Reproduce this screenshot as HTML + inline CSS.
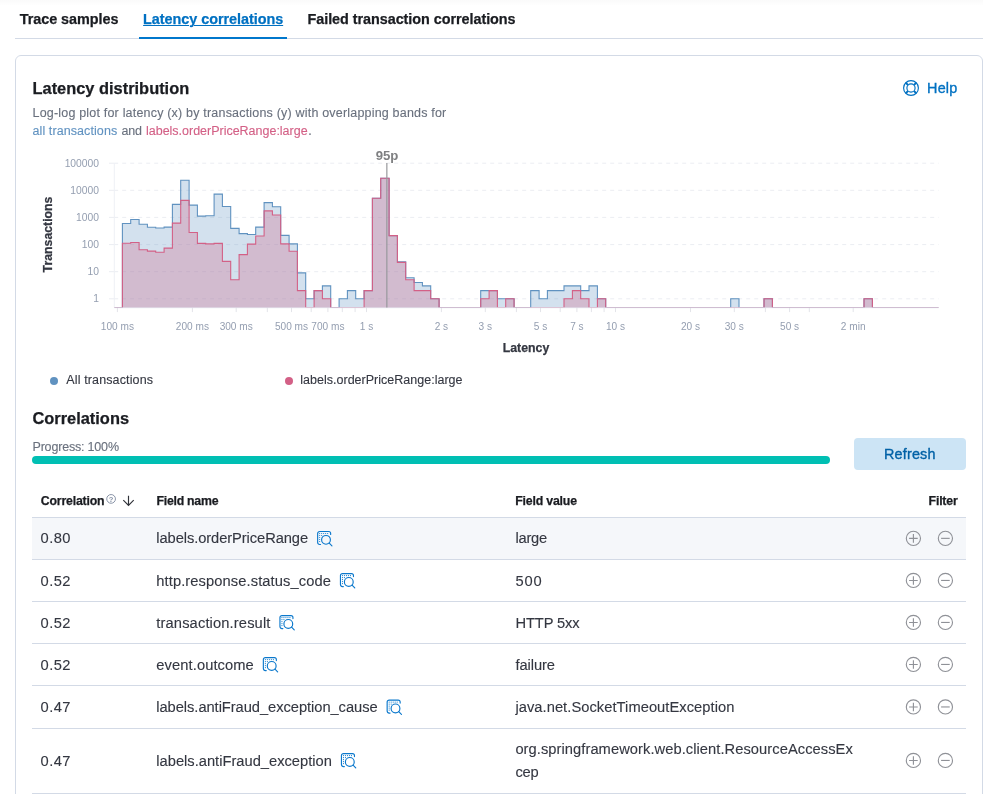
<!DOCTYPE html>
<html lang="en"><head><meta charset="utf-8"><title>Latency correlations</title>
<style>
html,body{margin:0;padding:0;background:#fff}
body{width:983px;height:794px;position:relative;overflow:hidden;font-family:"Liberation Sans",sans-serif;color:#343741}
.t{position:absolute;white-space:nowrap}
.ic{position:absolute}
.abs{position:absolute}
svg text{font-family:"Liberation Sans",sans-serif}
.chart{position:absolute;left:0;top:0}
#wrap{position:absolute;left:0;top:0;width:983px;height:794px;overflow:hidden;will-change:transform}
</style></head><body><div id="wrap">
<div class="abs" style="left:0;top:0;width:983px;height:5px;background:linear-gradient(#fafafa,#fefefe)"></div>
<div class="abs" style="left:15px;top:38px;width:968px;height:1px;background:#d3dae6"></div>
<div class="abs" style="left:139px;top:37px;width:148px;height:2px;background:#0077cc"></div>
<span class="t" id="tab1" style="left:19.8px;top:8.4px;font-size:14.4px;line-height:22px;font-weight:700;color:#1a1c21;letter-spacing:-0.051px;-webkit-text-stroke:0.25px #1a1c21;">Trace samples</span>
<span class="t" id="tab2" style="left:143.1px;top:8.4px;font-size:14.4px;line-height:22px;font-weight:700;color:#0071c2;letter-spacing:-0.035px;text-decoration:underline;text-underline-offset:1px;text-decoration-thickness:1.3px;-webkit-text-stroke:0.25px #0071c2;">Latency correlations</span>
<span class="t" id="tab3" style="left:307.5px;top:8.4px;font-size:14.4px;line-height:22px;font-weight:700;color:#1a1c21;letter-spacing:-0.048px;-webkit-text-stroke:0.25px #1a1c21;">Failed transaction correlations</span>
<div class="abs" style="left:15px;top:55px;width:966px;height:760px;border:1px solid #d3dae6;border-radius:6px;box-sizing:content-box"></div>
<span class="t" id="title" style="left:32.5px;top:76.2px;font-size:16.4px;line-height:24px;font-weight:700;color:#1a1c21;letter-spacing:0.003px;-webkit-text-stroke:0.25px #1a1c21;">Latency distribution</span>
<span class="t" id="d1" style="left:32.5px;top:103.6px;font-size:12.5px;line-height:18px;font-weight:400;color:#69707d;letter-spacing:0.193px;-webkit-text-stroke:0.12px #69707d;">Log-log plot for latency (x) by transactions (y) with overlapping bands for</span>
<span class="t" id="d2a" style="left:32.5px;top:121.8px;font-size:12.5px;line-height:18px;font-weight:400;color:#6092c0;letter-spacing:0.087px;-webkit-text-stroke:0.12px #6092c0;">all transactions</span>
<span class="t" id="d2b" style="left:121.6px;top:121.8px;font-size:12.5px;line-height:18px;font-weight:400;color:#69707d;letter-spacing:-0.229px;-webkit-text-stroke:0.12px #69707d;">and</span>
<span class="t" id="d2c" style="left:146.0px;top:121.8px;font-size:12.5px;line-height:18px;font-weight:400;color:#d36086;letter-spacing:-0.011px;-webkit-text-stroke:0.12px #d36086;">labels.orderPriceRange:large</span>
<span class="t" id="d2d" style="left:308.2px;top:121.8px;font-size:12.5px;line-height:18px;font-weight:400;color:#69707d;letter-spacing:0.000px;-webkit-text-stroke:0.12px #69707d;">.</span>
<span class="t" id="help" style="left:927.1px;top:76.6px;font-size:14.4px;line-height:22px;font-weight:500;color:#0071c2;letter-spacing:0.166px;-webkit-text-stroke:0.35px #0071c2;">Help</span>
<svg class="chart" width="983" height="400" viewBox="0 0 983 400">
<line x1="114.2" x2="938.7" y1="298.8" y2="298.8" stroke="#ebedf2" stroke-width="1" stroke-dasharray="4 4"/>
<line x1="109" x2="114.2" y1="298.8" y2="298.8" stroke="#ebedf2" stroke-width="1"/>
<line x1="114.2" x2="938.7" y1="271.7" y2="271.7" stroke="#ebedf2" stroke-width="1" stroke-dasharray="4 4"/>
<line x1="109" x2="114.2" y1="271.7" y2="271.7" stroke="#ebedf2" stroke-width="1"/>
<line x1="114.2" x2="938.7" y1="244.6" y2="244.6" stroke="#ebedf2" stroke-width="1" stroke-dasharray="4 4"/>
<line x1="109" x2="114.2" y1="244.6" y2="244.6" stroke="#ebedf2" stroke-width="1"/>
<line x1="114.2" x2="938.7" y1="217.4" y2="217.4" stroke="#ebedf2" stroke-width="1" stroke-dasharray="4 4"/>
<line x1="109" x2="114.2" y1="217.4" y2="217.4" stroke="#ebedf2" stroke-width="1"/>
<line x1="114.2" x2="938.7" y1="190.3" y2="190.3" stroke="#ebedf2" stroke-width="1" stroke-dasharray="4 4"/>
<line x1="109" x2="114.2" y1="190.3" y2="190.3" stroke="#ebedf2" stroke-width="1"/>
<line x1="114.2" x2="938.7" y1="163.2" y2="163.2" stroke="#ebedf2" stroke-width="1" stroke-dasharray="4 4"/>
<line x1="109" x2="114.2" y1="163.2" y2="163.2" stroke="#ebedf2" stroke-width="1"/>
<line x1="114.3" x2="114.3" y1="163" y2="307.5" stroke="#eef0f5" stroke-width="1"/>
<line x1="114.3" x2="938.7" y1="307.8" y2="307.8" stroke="#eef0f5" stroke-width="1"/>
<line x1="117.4" x2="117.4" y1="307.8" y2="312.1" stroke="#e3e4e9" stroke-width="1"/>
<line x1="192.4" x2="192.4" y1="307.8" y2="312.1" stroke="#e3e4e9" stroke-width="1"/>
<line x1="236.2" x2="236.2" y1="307.8" y2="312.1" stroke="#e3e4e9" stroke-width="1"/>
<line x1="267.3" x2="267.3" y1="307.8" y2="312.1" stroke="#e3e4e9" stroke-width="1"/>
<line x1="291.5" x2="291.5" y1="307.8" y2="312.1" stroke="#e3e4e9" stroke-width="1"/>
<line x1="311.2" x2="311.2" y1="307.8" y2="312.1" stroke="#e3e4e9" stroke-width="1"/>
<line x1="327.9" x2="327.9" y1="307.8" y2="312.1" stroke="#e3e4e9" stroke-width="1"/>
<line x1="342.3" x2="342.3" y1="307.8" y2="312.1" stroke="#e3e4e9" stroke-width="1"/>
<line x1="355.1" x2="355.1" y1="307.8" y2="312.1" stroke="#e3e4e9" stroke-width="1"/>
<line x1="366.5" x2="366.5" y1="307.8" y2="312.1" stroke="#e3e4e9" stroke-width="1"/>
<line x1="441.4" x2="441.4" y1="307.8" y2="312.1" stroke="#e3e4e9" stroke-width="1"/>
<line x1="485.3" x2="485.3" y1="307.8" y2="312.1" stroke="#e3e4e9" stroke-width="1"/>
<line x1="516.4" x2="516.4" y1="307.8" y2="312.1" stroke="#e3e4e9" stroke-width="1"/>
<line x1="540.5" x2="540.5" y1="307.8" y2="312.1" stroke="#e3e4e9" stroke-width="1"/>
<line x1="560.2" x2="560.2" y1="307.8" y2="312.1" stroke="#e3e4e9" stroke-width="1"/>
<line x1="576.9" x2="576.9" y1="307.8" y2="312.1" stroke="#e3e4e9" stroke-width="1"/>
<line x1="591.4" x2="591.4" y1="307.8" y2="312.1" stroke="#e3e4e9" stroke-width="1"/>
<line x1="604.1" x2="604.1" y1="307.8" y2="312.1" stroke="#e3e4e9" stroke-width="1"/>
<line x1="615.5" x2="615.5" y1="307.8" y2="312.1" stroke="#e3e4e9" stroke-width="1"/>
<line x1="690.5" x2="690.5" y1="307.8" y2="312.1" stroke="#e3e4e9" stroke-width="1"/>
<line x1="734.3" x2="734.3" y1="307.8" y2="312.1" stroke="#e3e4e9" stroke-width="1"/>
<line x1="765.4" x2="765.4" y1="307.8" y2="312.1" stroke="#e3e4e9" stroke-width="1"/>
<line x1="789.6" x2="789.6" y1="307.8" y2="312.1" stroke="#e3e4e9" stroke-width="1"/>
<line x1="809.3" x2="809.3" y1="307.8" y2="312.1" stroke="#e3e4e9" stroke-width="1"/>
<line x1="853.2" x2="853.2" y1="307.8" y2="312.1" stroke="#e3e4e9" stroke-width="1"/>
<defs><clipPath id="cp"><rect x="100" y="150" width="850" height="157.25"/></clipPath></defs>
<path d="M114.3 307.5H122.4 V223.5H130.7 V219.5H139.1 V224.2H147.4 V227.3H155.7 V228.0H164.1 V227.1H172.4 V204.4H180.7 V180.2H189.1 V205.1H197.4 V216.1H205.7 V215.7H214.1 V194.1H222.4 V206.5H230.7 V228.4H239.1 V233.6H247.4 V234.5H255.7 V227.1H264.1 V202.6H272.4 V206.7H280.7 V235.4H289.1 V243.9H297.4 V272.9H305.7 V298.8H314.1 V290.6H322.4 V285.9H330.7 V307.5H339.1 V298.8H347.4 V290.6H355.7 V298.8H364.1 V290.6H372.4 V198.2H380.7 V178.2H389.1 V235.6H397.4 V261.9H405.7 V277.7H414.1 V282.5H422.4 V285.9H430.7 V298.8H439.1 V307.5H480.7 V290.6H497.4 V298.8H514.1 V307.5H530.7 V290.6H539.1 V298.8H547.4 V290.6H564.0 V285.9H580.7 V290.6H589.0 V285.9H597.4 V298.8H605.7 V307.5H730.7 V298.8H739.0 V307.5H764.0 V298.8H772.4 V307.5H864.0 V298.8H872.4 V307.5H938.7Z" fill="#6092C0" fill-opacity="0.275"/>
<path d="M114.3 307.5H122.4 V223.5H130.7 V219.5H139.1 V224.2H147.4 V227.3H155.7 V228.0H164.1 V227.1H172.4 V204.4H180.7 V180.2H189.1 V205.1H197.4 V216.1H205.7 V215.7H214.1 V194.1H222.4 V206.5H230.7 V228.4H239.1 V233.6H247.4 V234.5H255.7 V227.1H264.1 V202.6H272.4 V206.7H280.7 V235.4H289.1 V243.9H297.4 V272.9H305.7 V298.8H314.1 V290.6H322.4 V285.9H330.7 V307.5H339.1 V298.8H347.4 V290.6H355.7 V298.8H364.1 V290.6H372.4 V198.2H380.7 V178.2H389.1 V235.6H397.4 V261.9H405.7 V277.7H414.1 V282.5H422.4 V285.9H430.7 V298.8H439.1 V307.5H480.7 V290.6H497.4 V298.8H514.1 V307.5H530.7 V290.6H539.1 V298.8H547.4 V290.6H564.0 V285.9H580.7 V290.6H589.0 V285.9H597.4 V298.8H605.7 V307.5H730.7 V298.8H739.0 V307.5H764.0 V298.8H772.4 V307.5H864.0 V298.8H872.4 V307.5H938.7" fill="none" stroke="#6092C0" stroke-width="1.1" clip-path="url(#cp)"/>
<path d="M114.3 307.5H122.4 V243.2H130.7 V242.5H139.1 V249.7H147.4 V251.1H155.7 V252.3H164.1 V248.1H172.4 V223.1H180.7 V200.4H189.1 V232.5H197.4 V243.4H205.7 V243.9H214.1 V243.4H222.4 V261.4H230.7 V279.8H239.1 V254.6H247.4 V244.1H255.7 V236.0H264.1 V210.9H272.4 V215.0H280.7 V243.9H289.1 V251.3H297.4 V290.6H305.7 V307.5H314.1 V290.6H322.4 V298.8H330.7 V307.5H364.1 V290.6H372.4 V198.2H380.7 V178.2H389.1 V235.6H397.4 V262.4H405.7 V279.8H414.1 V290.6H430.7 V298.8H439.1 V307.5H480.7 V298.8H489.1 V290.6H497.4 V307.5H505.7 V298.8H514.1 V307.5H564.0 V298.8H572.4 V290.6H580.7 V298.8H589.0 V307.5H597.4 V298.8H605.7 V307.5H764.0 V298.8H772.4 V307.5H864.0 V298.8H872.4 V307.5H938.7Z" fill="#D36086" fill-opacity="0.285"/>
<path d="M114.3 307.5H122.4 V243.2H130.7 V242.5H139.1 V249.7H147.4 V251.1H155.7 V252.3H164.1 V248.1H172.4 V223.1H180.7 V200.4H189.1 V232.5H197.4 V243.4H205.7 V243.9H214.1 V243.4H222.4 V261.4H230.7 V279.8H239.1 V254.6H247.4 V244.1H255.7 V236.0H264.1 V210.9H272.4 V215.0H280.7 V243.9H289.1 V251.3H297.4 V290.6H305.7 V307.5H314.1 V290.6H322.4 V298.8H330.7 V307.5H364.1 V290.6H372.4 V198.2H380.7 V178.2H389.1 V235.6H397.4 V262.4H405.7 V279.8H414.1 V290.6H430.7 V298.8H439.1 V307.5H480.7 V298.8H489.1 V290.6H497.4 V307.5H505.7 V298.8H514.1 V307.5H564.0 V298.8H572.4 V290.6H580.7 V298.8H589.0 V307.5H597.4 V298.8H605.7 V307.5H764.0 V298.8H772.4 V307.5H864.0 V298.8H872.4 V307.5H938.7" fill="none" stroke="#D36086" stroke-width="1.1" clip-path="url(#cp)"/>
<line x1="386.85" x2="386.85" y1="163" y2="307.5" stroke="#98999c" stroke-width="1.2"/>
<text x="387" y="160" text-anchor="middle" font-size="13.2" font-weight="700" fill="#7f8082">95p</text>
<text x="99" y="302.1" text-anchor="end" font-size="10.3" fill="#949eb0">1</text>
<text x="99" y="275.0" text-anchor="end" font-size="10.3" fill="#949eb0">10</text>
<text x="99" y="247.9" text-anchor="end" font-size="10.3" fill="#949eb0">100</text>
<text x="99" y="220.7" text-anchor="end" font-size="10.3" fill="#949eb0">1000</text>
<text x="99" y="193.6" text-anchor="end" font-size="10.3" fill="#949eb0">10000</text>
<text x="99" y="166.5" text-anchor="end" font-size="10.3" fill="#949eb0">100000</text>
<text x="117.4" y="330.3" text-anchor="middle" font-size="10.1" fill="#949eb0">100 ms</text>
<text x="192.4" y="330.3" text-anchor="middle" font-size="10.1" fill="#949eb0">200 ms</text>
<text x="236.2" y="330.3" text-anchor="middle" font-size="10.1" fill="#949eb0">300 ms</text>
<text x="291.5" y="330.3" text-anchor="middle" font-size="10.1" fill="#949eb0">500 ms</text>
<text x="327.9" y="330.3" text-anchor="middle" font-size="10.1" fill="#949eb0">700 ms</text>
<text x="366.5" y="330.3" text-anchor="middle" font-size="10.1" fill="#949eb0">1 s</text>
<text x="441.4" y="330.3" text-anchor="middle" font-size="10.1" fill="#949eb0">2 s</text>
<text x="485.3" y="330.3" text-anchor="middle" font-size="10.1" fill="#949eb0">3 s</text>
<text x="540.5" y="330.3" text-anchor="middle" font-size="10.1" fill="#949eb0">5 s</text>
<text x="576.9" y="330.3" text-anchor="middle" font-size="10.1" fill="#949eb0">7 s</text>
<text x="615.5" y="330.3" text-anchor="middle" font-size="10.1" fill="#949eb0">10 s</text>
<text x="690.5" y="330.3" text-anchor="middle" font-size="10.1" fill="#949eb0">20 s</text>
<text x="734.3" y="330.3" text-anchor="middle" font-size="10.1" fill="#949eb0">30 s</text>
<text x="789.6" y="330.3" text-anchor="middle" font-size="10.1" fill="#949eb0">50 s</text>
<text x="853.2" y="330.3" text-anchor="middle" font-size="10.1" fill="#949eb0">2 min</text>
<text x="526" y="351.5" text-anchor="middle" font-size="12.3" font-weight="700" fill="#343741" stroke="#343741" stroke-width="0.25">Latency</text>
<text transform="translate(52,234.5) rotate(-90)" text-anchor="middle" font-size="12.3" font-weight="700" fill="#343741" stroke="#343741" stroke-width="0.25">Transactions</text>
</svg>
<div class="abs" style="left:50px;top:376.6px;width:8px;height:8px;border-radius:50%;background:#6092c0"></div>
<span class="t" id="lg1" style="left:66.3px;top:370.7px;font-size:12.5px;line-height:18px;font-weight:400;color:#343741;letter-spacing:0.129px;-webkit-text-stroke:0.12px #343741;">All transactions</span>
<div class="abs" style="left:284.5px;top:376.6px;width:8px;height:8px;border-radius:50%;background:#d36086"></div>
<span class="t" id="lg2" style="left:300.3px;top:370.7px;font-size:12.5px;line-height:18px;font-weight:400;color:#343741;letter-spacing:0.011px;-webkit-text-stroke:0.12px #343741;">labels.orderPriceRange:large</span>
<span class="t" id="corr" style="left:32.5px;top:405.6px;font-size:16.4px;line-height:24px;font-weight:700;color:#1a1c21;letter-spacing:-0.004px;-webkit-text-stroke:0.25px #1a1c21;">Correlations</span>
<span class="t" id="prog" style="left:32.5px;top:437.7px;font-size:12.5px;line-height:18px;font-weight:400;color:#69707d;letter-spacing:-0.188px;-webkit-text-stroke:0.12px #69707d;">Progress: 100%</span>
<div class="abs" style="left:32px;top:456px;width:798px;height:8px;border-radius:4px;background:#00bfb3"></div>
<div class="abs" style="left:854px;top:438px;width:112px;height:32px;border-radius:4px;background:#cce4f5"></div>
<span class="t" id="refresh" style="left:884.0px;top:442.7px;font-size:14.4px;line-height:22px;font-weight:500;color:#0061a6;letter-spacing:0.185px;-webkit-text-stroke:0.35px #0061a6;">Refresh</span>
<span class="t" id="h1" style="left:40.8px;top:492.1px;font-size:12.3px;line-height:18px;font-weight:700;color:#1a1c21;letter-spacing:-0.189px;-webkit-text-stroke:0.25px #1a1c21;">Correlation</span>
<span class="t" id="h2" style="left:156.5px;top:492.1px;font-size:12.3px;line-height:18px;font-weight:700;color:#1a1c21;letter-spacing:-0.250px;-webkit-text-stroke:0.25px #1a1c21;">Field name</span>
<span class="t" id="h3" style="left:515.3px;top:492.1px;font-size:12.3px;line-height:18px;font-weight:700;color:#1a1c21;letter-spacing:-0.186px;-webkit-text-stroke:0.25px #1a1c21;">Field value</span>
<span class="t" id="h4" style="left:928.6px;top:492.1px;font-size:12.3px;line-height:18px;font-weight:700;color:#1a1c21;letter-spacing:-0.193px;-webkit-text-stroke:0.25px #1a1c21;">Filter</span>
<div class="abs" style="left:32px;top:518px;width:934px;height:41px;background:#f5f7fa"></div>
<div class="abs" style="left:32px;top:517px;width:934px;height:1px;background:#d3dae6"></div>
<div class="abs" style="left:32px;top:559px;width:934px;height:1px;background:#d3dae6"></div>
<div class="abs" style="left:32px;top:601px;width:934px;height:1px;background:#d3dae6"></div>
<div class="abs" style="left:32px;top:643px;width:934px;height:1px;background:#d3dae6"></div>
<div class="abs" style="left:32px;top:685px;width:934px;height:1px;background:#d3dae6"></div>
<div class="abs" style="left:32px;top:728px;width:934px;height:1px;background:#d3dae6"></div>
<div class="abs" style="left:32px;top:793px;width:934px;height:1px;background:#d3dae6"></div>
<span class="t" id="c0" style="left:40.6px;top:527.1px;font-size:14.7px;line-height:22px;font-weight:400;color:#343741;letter-spacing:0.437px;-webkit-text-stroke:0.12px #343741;">0.80</span>
<span class="t" id="f0" style="left:156.3px;top:527.1px;font-size:14.7px;line-height:22px;font-weight:400;color:#343741;letter-spacing:-0.081px;-webkit-text-stroke:0.12px #343741;">labels.orderPriceRange</span>
<span class="t" id="v0" style="left:515.4px;top:527.1px;font-size:14.7px;line-height:22px;font-weight:400;color:#343741;letter-spacing:-0.217px;-webkit-text-stroke:0.12px #343741;">large</span>
<span class="t" id="c1" style="left:40.6px;top:569.7px;font-size:14.7px;line-height:22px;font-weight:400;color:#343741;letter-spacing:0.437px;-webkit-text-stroke:0.12px #343741;">0.52</span>
<span class="t" id="f1" style="left:156.3px;top:569.7px;font-size:14.7px;line-height:22px;font-weight:400;color:#343741;letter-spacing:0.096px;-webkit-text-stroke:0.12px #343741;">http.response.status_code</span>
<span class="t" id="v1" style="left:515.4px;top:569.7px;font-size:14.7px;line-height:22px;font-weight:400;color:#343741;letter-spacing:0.846px;-webkit-text-stroke:0.12px #343741;">500</span>
<span class="t" id="c2" style="left:40.6px;top:611.6px;font-size:14.7px;line-height:22px;font-weight:400;color:#343741;letter-spacing:0.437px;-webkit-text-stroke:0.12px #343741;">0.52</span>
<span class="t" id="f2" style="left:156.3px;top:611.6px;font-size:14.7px;line-height:22px;font-weight:400;color:#343741;letter-spacing:0.133px;-webkit-text-stroke:0.12px #343741;">transaction.result</span>
<span class="t" id="v2" style="left:515.4px;top:611.6px;font-size:14.7px;line-height:22px;font-weight:400;color:#343741;letter-spacing:-0.104px;-webkit-text-stroke:0.12px #343741;">HTTP 5xx</span>
<span class="t" id="c3" style="left:40.6px;top:653.7px;font-size:14.7px;line-height:22px;font-weight:400;color:#343741;letter-spacing:0.437px;-webkit-text-stroke:0.12px #343741;">0.52</span>
<span class="t" id="f3" style="left:156.3px;top:653.7px;font-size:14.7px;line-height:22px;font-weight:400;color:#343741;letter-spacing:0.096px;-webkit-text-stroke:0.12px #343741;">event.outcome</span>
<span class="t" id="v3" style="left:515.4px;top:653.7px;font-size:14.7px;line-height:22px;font-weight:400;color:#343741;letter-spacing:-0.069px;-webkit-text-stroke:0.12px #343741;">failure</span>
<span class="t" id="c4" style="left:40.6px;top:695.7px;font-size:14.7px;line-height:22px;font-weight:400;color:#343741;letter-spacing:0.437px;-webkit-text-stroke:0.12px #343741;">0.47</span>
<span class="t" id="f4" style="left:156.3px;top:695.7px;font-size:14.7px;line-height:22px;font-weight:400;color:#343741;letter-spacing:-0.052px;-webkit-text-stroke:0.12px #343741;">labels.antiFraud_exception_cause</span>
<span class="t" id="v4" style="left:515.4px;top:695.7px;font-size:14.7px;line-height:22px;font-weight:400;color:#343741;letter-spacing:0.052px;-webkit-text-stroke:0.12px #343741;">java.net.SocketTimeoutException</span>
<span class="t" id="c5" style="left:40.6px;top:749.6px;font-size:14.7px;line-height:22px;font-weight:400;color:#343741;letter-spacing:0.437px;-webkit-text-stroke:0.12px #343741;">0.47</span>
<span class="t" id="f5" style="left:156.3px;top:749.6px;font-size:14.7px;line-height:22px;font-weight:400;color:#343741;letter-spacing:0.002px;-webkit-text-stroke:0.12px #343741;">labels.antiFraud_exception</span>
<span class="t" id="v5a" style="left:515.4px;top:737.7px;font-size:14.7px;line-height:22px;font-weight:400;color:#343741;letter-spacing:0.059px;-webkit-text-stroke:0.12px #343741;">org.springframework.web.client.ResourceAccessEx</span>
<span class="t" id="v5b" style="left:515.4px;top:761.3px;font-size:14.7px;line-height:22px;font-weight:400;color:#343741;letter-spacing:-0.144px;-webkit-text-stroke:0.12px #343741;">cep</span>
<svg class="chart" width="983" height="794" viewBox="0 0 983 794"><g transform="translate(903 80)"><g fill="none" stroke="#0071c2" stroke-width="1.15"><circle cx="8" cy="8" r="7.4"/><circle cx="8" cy="8" r="4.1"/><path d="M2.7 2.7l2.3 2.3M13.3 2.7l-2.3 2.3M2.7 13.3l2.3-2.3M13.3 13.3l-2.3-2.3" stroke-width="1.9"/></g></g><g transform="translate(106.1 493.9)"><circle cx="5" cy="5" r="4.35" fill="none" stroke="#8792a6" stroke-width="1"/><text x="5" y="7.7" text-anchor="middle" font-size="7.6" font-weight="700" fill="#8792a6">?</text></g><path d="M128.5 495.8V505.3M123.3 500.2L128.5 505.4L133.7 500.2" fill="none" stroke="#2f3138" stroke-width="1.15"/><g transform="translate(316.15 530.00)"><g fill="none" stroke="#0b78cc" stroke-width="1.15" stroke-linecap="round"><path d="M4.4 14.5H3.5a2 2 0 0 1-2-2v-9a2 2 0 0 1 2-2h9a2 2 0 0 1 2 2v1"/><circle cx="9.85" cy="9.85" r="4.4"/><path d="M13.1 13.1l2.7 2.7"/></g><g fill="#0b78cc"><circle cx="3.5" cy="3.5" r=".55"/><circle cx="5.5" cy="3.5" r=".55"/><circle cx="7.5" cy="3.5" r=".55"/><circle cx="9.5" cy="3.5" r=".55"/><circle cx="11.5" cy="3.5" r=".55"/><circle cx="3.5" cy="5.5" r=".55"/><circle cx="5.5" cy="5.5" r=".55"/><circle cx="3.5" cy="7.5" r=".55"/><circle cx="3.5" cy="9.5" r=".55"/><circle cx="3.5" cy="11.5" r=".55"/></g></g><g transform="translate(905.40 530.35)"><circle cx="8" cy="8" r="7.1" fill="none" stroke="#8f9197" stroke-width="1.12"/><path d="M8 3.7v8.6M3.7 8h8.6" stroke="#8f9197" stroke-width="1.12" fill="none"/></g><g transform="translate(937.40 530.35)"><circle cx="8" cy="8" r="7.1" fill="none" stroke="#8f9197" stroke-width="1.12"/><path d="M3.7 8h8.6" stroke="#8f9197" stroke-width="1.12" fill="none"/></g><g transform="translate(338.95 572.10)"><g fill="none" stroke="#0b78cc" stroke-width="1.15" stroke-linecap="round"><path d="M4.4 14.5H3.5a2 2 0 0 1-2-2v-9a2 2 0 0 1 2-2h9a2 2 0 0 1 2 2v1"/><circle cx="9.85" cy="9.85" r="4.4"/><path d="M13.1 13.1l2.7 2.7"/></g><g fill="#0b78cc"><circle cx="3.5" cy="3.5" r=".55"/><circle cx="5.5" cy="3.5" r=".55"/><circle cx="7.5" cy="3.5" r=".55"/><circle cx="9.5" cy="3.5" r=".55"/><circle cx="11.5" cy="3.5" r=".55"/><circle cx="3.5" cy="5.5" r=".55"/><circle cx="5.5" cy="5.5" r=".55"/><circle cx="3.5" cy="7.5" r=".55"/><circle cx="3.5" cy="9.5" r=".55"/><circle cx="3.5" cy="11.5" r=".55"/></g></g><g transform="translate(905.40 572.45)"><circle cx="8" cy="8" r="7.1" fill="none" stroke="#8f9197" stroke-width="1.12"/><path d="M8 3.7v8.6M3.7 8h8.6" stroke="#8f9197" stroke-width="1.12" fill="none"/></g><g transform="translate(937.40 572.45)"><circle cx="8" cy="8" r="7.1" fill="none" stroke="#8f9197" stroke-width="1.12"/><path d="M3.7 8h8.6" stroke="#8f9197" stroke-width="1.12" fill="none"/></g><g transform="translate(278.45 614.10)"><g fill="none" stroke="#0b78cc" stroke-width="1.15" stroke-linecap="round"><path d="M4.4 14.5H3.5a2 2 0 0 1-2-2v-9a2 2 0 0 1 2-2h9a2 2 0 0 1 2 2v1"/><circle cx="9.85" cy="9.85" r="4.4"/><path d="M13.1 13.1l2.7 2.7"/></g><g fill="#0b78cc"><circle cx="3.5" cy="3.5" r=".55"/><circle cx="5.5" cy="3.5" r=".55"/><circle cx="7.5" cy="3.5" r=".55"/><circle cx="9.5" cy="3.5" r=".55"/><circle cx="11.5" cy="3.5" r=".55"/><circle cx="3.5" cy="5.5" r=".55"/><circle cx="5.5" cy="5.5" r=".55"/><circle cx="3.5" cy="7.5" r=".55"/><circle cx="3.5" cy="9.5" r=".55"/><circle cx="3.5" cy="11.5" r=".55"/></g></g><g transform="translate(905.40 614.45)"><circle cx="8" cy="8" r="7.1" fill="none" stroke="#8f9197" stroke-width="1.12"/><path d="M8 3.7v8.6M3.7 8h8.6" stroke="#8f9197" stroke-width="1.12" fill="none"/></g><g transform="translate(937.40 614.45)"><circle cx="8" cy="8" r="7.1" fill="none" stroke="#8f9197" stroke-width="1.12"/><path d="M3.7 8h8.6" stroke="#8f9197" stroke-width="1.12" fill="none"/></g><g transform="translate(261.85 656.10)"><g fill="none" stroke="#0b78cc" stroke-width="1.15" stroke-linecap="round"><path d="M4.4 14.5H3.5a2 2 0 0 1-2-2v-9a2 2 0 0 1 2-2h9a2 2 0 0 1 2 2v1"/><circle cx="9.85" cy="9.85" r="4.4"/><path d="M13.1 13.1l2.7 2.7"/></g><g fill="#0b78cc"><circle cx="3.5" cy="3.5" r=".55"/><circle cx="5.5" cy="3.5" r=".55"/><circle cx="7.5" cy="3.5" r=".55"/><circle cx="9.5" cy="3.5" r=".55"/><circle cx="11.5" cy="3.5" r=".55"/><circle cx="3.5" cy="5.5" r=".55"/><circle cx="5.5" cy="5.5" r=".55"/><circle cx="3.5" cy="7.5" r=".55"/><circle cx="3.5" cy="9.5" r=".55"/><circle cx="3.5" cy="11.5" r=".55"/></g></g><g transform="translate(905.40 656.45)"><circle cx="8" cy="8" r="7.1" fill="none" stroke="#8f9197" stroke-width="1.12"/><path d="M8 3.7v8.6M3.7 8h8.6" stroke="#8f9197" stroke-width="1.12" fill="none"/></g><g transform="translate(937.40 656.45)"><circle cx="8" cy="8" r="7.1" fill="none" stroke="#8f9197" stroke-width="1.12"/><path d="M3.7 8h8.6" stroke="#8f9197" stroke-width="1.12" fill="none"/></g><g transform="translate(385.65 698.60)"><g fill="none" stroke="#0b78cc" stroke-width="1.15" stroke-linecap="round"><path d="M4.4 14.5H3.5a2 2 0 0 1-2-2v-9a2 2 0 0 1 2-2h9a2 2 0 0 1 2 2v1"/><circle cx="9.85" cy="9.85" r="4.4"/><path d="M13.1 13.1l2.7 2.7"/></g><g fill="#0b78cc"><circle cx="3.5" cy="3.5" r=".55"/><circle cx="5.5" cy="3.5" r=".55"/><circle cx="7.5" cy="3.5" r=".55"/><circle cx="9.5" cy="3.5" r=".55"/><circle cx="11.5" cy="3.5" r=".55"/><circle cx="3.5" cy="5.5" r=".55"/><circle cx="5.5" cy="5.5" r=".55"/><circle cx="3.5" cy="7.5" r=".55"/><circle cx="3.5" cy="9.5" r=".55"/><circle cx="3.5" cy="11.5" r=".55"/></g></g><g transform="translate(905.40 698.95)"><circle cx="8" cy="8" r="7.1" fill="none" stroke="#8f9197" stroke-width="1.12"/><path d="M8 3.7v8.6M3.7 8h8.6" stroke="#8f9197" stroke-width="1.12" fill="none"/></g><g transform="translate(937.40 698.95)"><circle cx="8" cy="8" r="7.1" fill="none" stroke="#8f9197" stroke-width="1.12"/><path d="M3.7 8h8.6" stroke="#8f9197" stroke-width="1.12" fill="none"/></g><g transform="translate(339.95 752.10)"><g fill="none" stroke="#0b78cc" stroke-width="1.15" stroke-linecap="round"><path d="M4.4 14.5H3.5a2 2 0 0 1-2-2v-9a2 2 0 0 1 2-2h9a2 2 0 0 1 2 2v1"/><circle cx="9.85" cy="9.85" r="4.4"/><path d="M13.1 13.1l2.7 2.7"/></g><g fill="#0b78cc"><circle cx="3.5" cy="3.5" r=".55"/><circle cx="5.5" cy="3.5" r=".55"/><circle cx="7.5" cy="3.5" r=".55"/><circle cx="9.5" cy="3.5" r=".55"/><circle cx="11.5" cy="3.5" r=".55"/><circle cx="3.5" cy="5.5" r=".55"/><circle cx="5.5" cy="5.5" r=".55"/><circle cx="3.5" cy="7.5" r=".55"/><circle cx="3.5" cy="9.5" r=".55"/><circle cx="3.5" cy="11.5" r=".55"/></g></g><g transform="translate(905.40 752.45)"><circle cx="8" cy="8" r="7.1" fill="none" stroke="#8f9197" stroke-width="1.12"/><path d="M8 3.7v8.6M3.7 8h8.6" stroke="#8f9197" stroke-width="1.12" fill="none"/></g><g transform="translate(937.40 752.45)"><circle cx="8" cy="8" r="7.1" fill="none" stroke="#8f9197" stroke-width="1.12"/><path d="M3.7 8h8.6" stroke="#8f9197" stroke-width="1.12" fill="none"/></g></svg>
</div></body></html>
